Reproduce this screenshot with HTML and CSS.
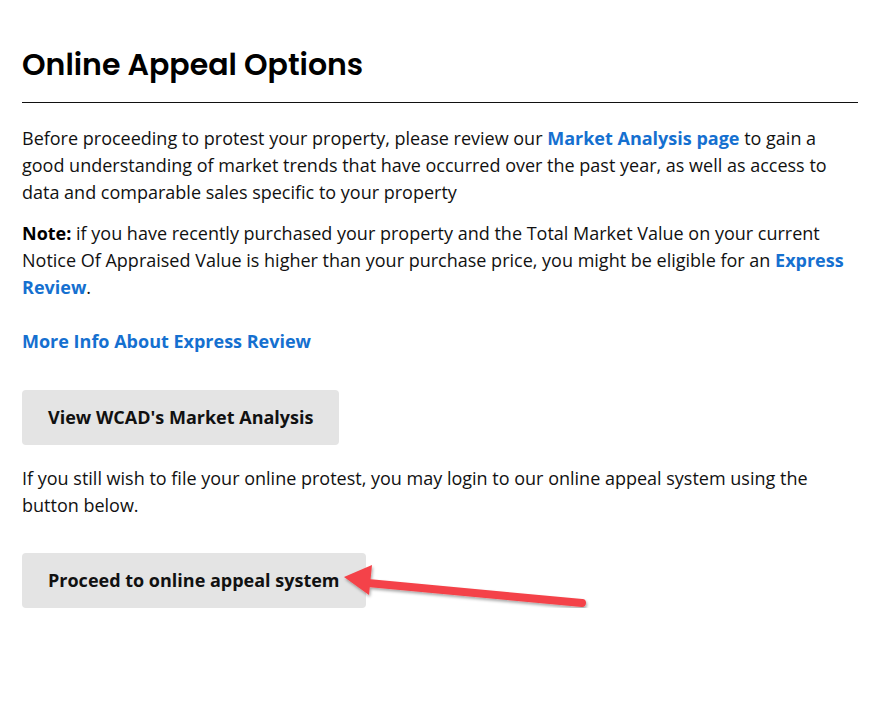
FILE: index.html
```html
<!DOCTYPE html>
<html lang="en">
<head>
<meta charset="utf-8">
<title>Online Appeal Options</title>
<link rel="stylesheet" href="styles.css">
</head>
<body>
<main class="page">
  <h1 class="title">Online Appeal Options</h1>
  <hr class="rule">
  <p class="text">Before proceeding to protest your property, please review our <a class="link" href="#">Market Analysis page</a> to gain a good understanding of market trends that have occurred over the past year, as well as access to data and comparable sales specific to your property</p>
  <p class="text"><strong>Note:</strong> if you have recently purchased your property and the Total Market Value on your current Notice Of Appraised Value is higher than your purchase price, you might be eligible for an <a class="link" href="#">Express Review</a>.</p>
  <p class="text more"><a class="link" href="#">More Info About Express Review</a></p>
  <div class="btn-row first"><a class="btn" href="#">View WCAD's Market Analysis</a></div>
  <p class="text">If you still wish to file your online protest, you may login to our online appeal system using the button below.</p>
  <div class="btn-row second">
    <a class="btn" href="#">Proceed to online appeal system</a>
    <svg class="arrow" width="260" height="60" viewBox="0 0 260 60" aria-hidden="true">
      <defs>
        <filter id="sh" x="-10%" y="-30%" width="120%" height="160%">
          <feDropShadow dx="1" dy="2" stdDeviation="1.5" flood-color="#000" flood-opacity="0.35"/>
        </filter>
      </defs>
      <g filter="url(#sh)">
        <line x1="24" y1="30" x2="238" y2="50" stroke="#f44348" stroke-width="8" stroke-linecap="round"/>
        <polygon points="0,24 28,12 25,42" fill="#f44348"/>
      </g>
    </svg>
  </div>
</main>
</body>
</html>
```

FILE: styles.css
```css
* { box-sizing: border-box; }
html, body { margin: 0; padding: 0; background: #fff; }
body {
  font-family: "Open Sans", "Noto Sans", sans-serif;
  font-size: 18px;
  line-height: 27px;
  color: #111;
}
.page {
  padding: 45px 14px 0 22px;
}
.title {
  font-family: "Poppins", "Inter", "Lato", sans-serif;
  font-weight: 600;
  font-size: 30px;
  line-height: 40px;
  margin: 0 0 17px 0;
  color: #000;
}
.rule {
  border: 0;
  border-top: 1.5px solid #111;
  margin: 0 0 22px 0;
}
.text {
  margin: 0 0 14px 0;
}
.text strong { font-weight: 700; color: #000; }
.link {
  color: #1570d0;
  font-weight: 700;
  text-decoration: none;
}
.more {
  margin-top: 27px;
  margin-bottom: 0;
}
.btn-row {
  display: flex;
  position: relative;
}
.btn-row.first { margin-top: 35px; margin-bottom: 20px; }
.btn-row.second { margin-top: 34px; }
.btn {
  display: inline-block;
  background: #e4e4e4;
  color: #111;
  font-weight: 700;
  text-decoration: none;
  padding: 14px 26px 14px 26px;
  border-radius: 4px;
}
.arrow {
  position: absolute;
  left: 322px;
  top: 0px;
  overflow: visible;
}
```
